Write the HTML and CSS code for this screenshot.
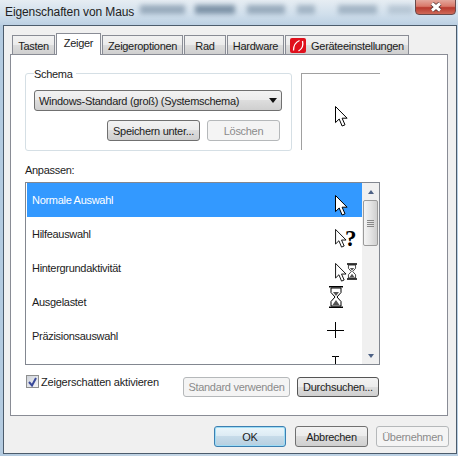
FILE: index.html
```html
<!DOCTYPE html>
<html lang="de">
<head>
<meta charset="utf-8">
<title>Eigenschaften von Maus</title>
<link rel="stylesheet" href="styles.css">
</head>
<body>
<svg class="defs" width="0" height="0" aria-hidden="true">
  <symbol id="arrow" viewBox="0 0 13 21">
    <path d="M.5.5V16.600L4.200 13l2.900 7 2.900-1.200-2.900-6.600h5Z" fill="#fff" stroke="#000" stroke-width="1" stroke-linejoin="miter"/>
  </symbol>
  <symbol id="glass" viewBox="0 0 14 22">
    <path d="M0 .5H14M0 21.500H14" stroke="#000" stroke-width="2" fill="none"/>
    <path d="M2 2V6.500L6 11 2 15.500V20H12V15.500L8 11 12 6.500V2Z" fill="#fff" stroke="#000"/>
    <path d="M4 6H10L7 10Z M3.500 19 7 14 10.500 19Z" fill="#555"/>
  </symbol>
</svg>
<main class="window">
  <header class="titlebar">
    <span class="title">Eigenschaften von Maus</span>
    <div class="blurs"><i class="blur b1"></i><i class="blur b2"></i><i class="blur b3"></i><i class="blur b4"></i><i class="blur b5"></i><i class="blur b6"></i></div>
    <div class="close"><svg width="14" height="10" viewBox="0 0 14 10"><path d="M3 1.500l8 7M11 1.500l-8 7" stroke="#4a2a2a" stroke-width="4.500" fill="none"/><path d="M3 1.500l8 7M11 1.500l-8 7" stroke="#fff" stroke-width="3" fill="none"/></svg></div>
  </header>
  <section class="dialog">
    <nav class="tabs">
      <span class="tab t1">Tasten</span>
      <span class="tab active t2">Zeiger</span>
      <span class="tab t3">Zeigeroptionen</span>
      <span class="tab t4">Rad</span>
      <span class="tab t5">Hardware</span>
      <span class="tab t6"><svg class="logo" width="16" height="15" viewBox="0 0 16 15"><rect width="16" height="15" rx="2" fill="#e0101c"/><path d="M9.500 2.500C6 4 3.500 8 3.500 12.500M12.500 3C13.500 7 12 11 8.500 13" fill="none" stroke="#fff" stroke-width="1.300"/></svg>Geräteeinstellungen</span>
    </nav>
    <div class="page">
      <div class="top">
        <div class="group">
          <span class="legend">Schema</span>
          <div class="select"><span>Windows-Standard (groß) (Systemschema)</span><i class="caret"></i></div>
          <div class="group-actions">
            <button class="btn btn-save">Speichern unter...</button>
            <button class="btn btn-del" disabled>Löschen</button>
          </div>
        </div>
        <div class="preview"><svg class="preview-cursor" width="13" height="21"><use href="#arrow"/></svg></div>
      </div>
      <div class="list-label">Anpassen:</div>
      <div class="list">
        <div class="rows">
          <div class="row selected"><span>Normale Auswahl</span><svg class="ico" width="32" height="32" viewBox="0 0 32 32"><use href="#arrow" x="8" y="11" width="13" height="21"/></svg></div>
          <div class="row"><span>Hilfeauswahl</span><svg class="ico" width="32" height="32" viewBox="0 0 32 32"><use href="#arrow" x="8" y="11" width="12" height="19"/><text class="q" x="18" y="28">?</text></svg></div>
          <div class="row"><span>Hintergrundaktivität</span><svg class="ico" width="32" height="32" viewBox="0 0 32 32"><use href="#arrow" x="8" y="11" width="12" height="19"/><use href="#glass" x="20" y="11" width="10" height="17"/></svg></div>
          <div class="row"><span>Ausgelastet</span><svg class="ico" width="32" height="32" viewBox="0 0 32 32"><use href="#glass" x="2" y="0" width="14" height="22"/></svg></div>
          <div class="row"><span>Präzisionsauswahl</span><svg class="ico" width="32" height="32" viewBox="0 0 32 32"><path d="M0 10.500H17M8.500 2V18" stroke="#000" fill="none"/></svg></div>
          <div class="row"><span></span><svg class="ico" width="32" height="32" viewBox="0 0 32 32"><path d="M5 2.500H8.500V16M12 2.500H8.500" stroke="#000" fill="none"/></svg></div>
        </div>
        <div class="scrollbar">
          <div class="arrow-btn"><i class="sb-up"></i></div>
          <div class="thumb"><i></i><i></i><i></i><i></i></div>
          <div class="track"></div>
          <div class="arrow-btn"><i class="sb-down"></i></div>
        </div>
      </div>
      <div class="bottom">
        <label class="check"><span class="box"><svg width="9" height="10" viewBox="0 0 9 10"><path d="M1 5l3 3.500L8 1" fill="none" stroke="#3a4a9a" stroke-width="2"/></svg></span>Zeigerschatten aktivieren</label>
        <button class="btn btn-std" disabled>Standard verwenden</button>
        <button class="btn btn-browse">Durchsuchen...</button>
      </div>
    </div>
    <footer class="footer">
      <button class="btn btn-ok default">OK</button>
      <button class="btn btn-foot">Abbrechen</button>
      <button class="btn btn-foot" disabled>Übernehmen</button>
    </footer>
  </section>
</main>
</body>
</html>
```
FILE: styles.css
```css
* { box-sizing: border-box; }
html, body { margin: 0; padding: 0; }
body {
  width: 458px;
  height: 456px;
  overflow: hidden;
  font-family: "Liberation Sans", Arial, sans-serif;
  font-size: 11px;
  letter-spacing: -.3px;
  color: #1c1c1c;
  background: #b9cde0;
}
.defs { position: absolute; }
.window {
  height: 456px;
  display: flex;
  flex-direction: column;
  background: linear-gradient(90deg, #b4cbe0, #c4d6e6 40%, #b9cfe3);
}
.titlebar {
  height: 25px;
  position: relative;
  overflow: hidden;
  background: linear-gradient(180deg, #e6edf3 0, #cfdeeb 60%, #bcd0e3 100%);
}
.title {
  position: absolute;
  left: 5px;
  top: 5px;
  font-size: 12px;
  letter-spacing: -.1px;
  color: #222;
}
.blurs { position: absolute; left: 140px; top: 5px; display: flex; }
.blur { display: block; height: 9px; filter: blur(2.500px); background: #6f869c; opacity: .6; }
.b1 { width: 45px; margin-right: 10px; }
.b2 { width: 40px; margin-right: 12px; opacity: .85; }
.b3 { width: 38px; margin-right: 12px; }
.b4 { width: 18px; margin-right: 23px; opacity: .5; }
.b5 { width: 39px; margin-right: 11px; opacity: .5; }
.b6 { width: 25px; opacity: .3; }
.close {
  position: absolute;
  right: 2px;
  top: -1px;
  width: 41px;
  height: 16px;
  border: 1px solid #6a4a4a;
  border-radius: 0 0 4px 4px;
  background: linear-gradient(180deg, #e3a79c 0, #d9796a 45%, #b83a2e 55%, #cf6a58 100%);
  display: flex;
  align-items: center;
  justify-content: center;
}
.dialog {
  flex: 1;
  margin: 0 1px 2px 3px;
  border: 1px solid #4c5c6c;
  background: #f0f0f0;
  padding: 7px 8px 0 6px;
  display: flex;
  flex-direction: column;
}
.tabs {
  height: 21px;
  padding-left: 2px;
  display: flex;
  align-items: flex-end;
  gap: 1px;
  position: relative;
  z-index: 1;
}
.tab {
  height: 19px;
  padding-top: 1px;
  border: 1px solid #898c95;
  border-bottom: 0;
  background: linear-gradient(180deg, #f2f2f2, #ebebeb 50%, #dddddd 50%, #cfcfcf);
  display: flex;
  align-items: center;
  justify-content: center;
  white-space: nowrap;
}
.tab.active {
  height: 22px;
  margin-bottom: -1px;
  padding: 0 0 3px;
  background: #fff;
}
.t1 { width: 43px; }
.t2 { width: 45px; }
.t3 { width: 81px; }
.t4 { width: 42px; }
.t5 { width: 57px; }
.t6 { width: 124px; }
.logo { margin-right: 5px; }
.page {
  height: 362px;
  background: #fff;
  border: 1px solid #898c95;
  padding: 18px 0 0 14px;
}
.top { display: flex; gap: 9px; height: 79px; }
.group {
  position: relative;
  width: 267px;
  height: 78px;
  padding: 16px 9px 0 8px;
  border: 1px solid #d5dfe5;
  border-radius: 3px;
}
.legend {
  position: absolute;
  left: 8px;
  top: -7px;
  padding-right: 3px;
  line-height: 14px;
  background: #fff;
}
.select {
  width: 248px;
  height: 21px;
  border: 1px solid #707070;
  border-radius: 3px;
  background: linear-gradient(180deg, #f2f2f2, #ebebeb 50%, #dddddd 50%, #cfcfcf);
  display: flex;
  align-items: center;
  justify-content: space-between;
  padding: 0 4px;
  white-space: nowrap;
}
.caret {
  width: 0;
  height: 0;
  border: 4px solid transparent;
  border-top: 5px solid #111;
  border-bottom: 0;
}
.group-actions {
  display: flex;
  gap: 7px;
  margin-top: 9px;
  margin-left: 73px;
}
.btn {
  height: 21px;
  padding: 0;
  font: inherit;
  letter-spacing: inherit;
  color: #1c1c1c;
  border: 1px solid #707070;
  border-radius: 3px;
  background: linear-gradient(180deg, #f2f2f2, #ebebeb 50%, #dddddd 50%, #cfcfcf);
  white-space: nowrap;
}
.btn:disabled {
  color: #8b8b8b;
  border-color: #b5b8ba;
  background: #f4f4f4;
}
.btn-save { width: 93px; }
.btn-del { width: 73px; }
.preview {
  width: 79px;
  height: 77px;
  border-top: 1px solid #a0a0a0;
  border-left: 1px solid #a0a0a0;
  position: relative;
}
.preview-cursor { position: absolute; left: 33px; top: 32px; }
.list-label { margin-top: 11px; line-height: 14px; }
.list {
  width: 355px;
  height: 183px;
  margin-top: 5px;
  border: 1px solid #828790;
  display: flex;
  padding-left: 1px;
  overflow: hidden;
}
.rows { flex: 1; min-width: 0; }
.row {
  height: 34px;
  display: flex;
  justify-content: space-between;
  align-items: flex-start;
  padding: 1px 3px 0 5px;
  color: #1c1c1c;
}
.row span { margin-top: 10px; }
.row.selected { background: #3399ff; color: #fff; }
.ico { flex: none; overflow: visible; }
.q {
  font-family: "Liberation Serif", serif;
  font-weight: 700;
  font-size: 23px;
  letter-spacing: 0;
  fill: #000;
}
.scrollbar {
  width: 17px;
  height: 181px;
  background: #f0f0f0;
  display: flex;
  flex-direction: column;
}
.arrow-btn {
  height: 17px;
  display: flex;
  align-items: center;
  justify-content: center;
}
.sb-up, .sb-down { width: 0; height: 0; border: 3.500px solid transparent; }
.sb-up { border-top: 0; border-bottom: 4px solid #4d6185; }
.sb-down { border-bottom: 0; border-top: 4px solid #4d6185; }
.thumb {
  height: 46px;
  margin: 0 0 0 1px;
  width: 15px;
  border: 1px solid #9a9a9a;
  border-radius: 2px;
  background: linear-gradient(90deg, #f4f4f4, #e4e4e4 50%, #cfcfcf);
  display: flex;
  flex-direction: column;
  justify-content: center;
  align-items: center;
  gap: 1px;
}
.thumb i { display: block; width: 7px; height: 1px; background: #888; }
.track { flex: 1; }
.bottom {
  display: flex;
  align-items: flex-start;
  margin-top: 10px;
}
.check {
  width: 157px;
  display: flex;
  align-items: center;
  gap: 2px;
  height: 13px;
  margin-left: 1px;
  letter-spacing: -.2px;
}
.box {
  width: 13px;
  height: 13px;
  border: 1px solid #8e8f8f;
  background: linear-gradient(135deg, #cfd3da, #f5f5f7);
  display: flex;
  align-items: center;
  justify-content: center;
}
.btn-std { width: 107px; height: 20px; margin-top: 2px; }
.btn-browse { width: 82px; height: 20px; margin-top: 2px; margin-left: 7px; border-color: #555; }
.footer {
  display: flex;
  justify-content: flex-end;
  gap: 8px;
  padding: 10px 0 0;
  margin-right: -1px;
}
.btn-foot { width: 73px; height: 21px; }
.btn-ok { width: 72px; height: 21px; margin-right: 1px; }
.default { border-color: #3c7fb1; box-shadow: inset 0 0 0 1px #9edcf5; background: linear-gradient(180deg, #eaf6fb, #dbeaf3 50%, #c6dbe9 50%, #b6cfe0); }
```
